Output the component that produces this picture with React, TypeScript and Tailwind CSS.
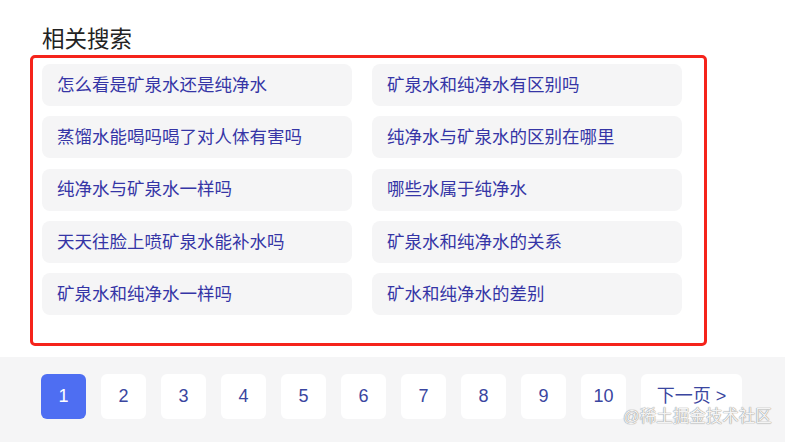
const related: string[] = [
  "怎么看是矿泉水还是纯净水",
  "矿泉水和纯净水有区别吗",
  "蒸馏水能喝吗喝了对人体有害吗",
  "纯净水与矿泉水的区别在哪里",
  "纯净水与矿泉水一样吗",
  "哪些水属于纯净水",
  "天天往脸上喷矿泉水能补水吗",
  "矿泉水和纯净水的关系",
  "矿泉水和纯净水一样吗",
  "矿水和纯净水的差别",
]

const pages = [1, 2, 3, 4, 5, 6, 7, 8, 9, 10]

export default function App() {
  return (
    <div
      className="relative w-[785px] h-[442px] bg-white overflow-hidden"
      style={{ fontFamily: '"Liberation Sans", "Noto Sans CJK SC", sans-serif' }}
    >
      <div className="pt-[25px] pl-[42px] text-[22.5px] leading-[30px] text-[#222222]">相关搜索</div>

      <div className="ml-[30px] w-[677px] h-[291px] border-[3px] border-[#f5231b] rounded-[5px] pt-[6px] pl-[9px]">
        <div className="grid grid-cols-[310px_310px] gap-x-[20px] gap-y-[10.25px]">
          {related.map((q) => (
            <div
              key={q}
              className="h-[42px] rounded-[8px] bg-[#f5f5f6] pl-[15px] flex items-center text-[17.5px] text-[#3535a6] whitespace-nowrap"
            >
              {q}
            </div>
          ))}
        </div>
      </div>

      <div className="mt-[11px] h-[85px] bg-[#f5f5f6] pt-[17px] pl-[41px] flex gap-[15px]">
        {pages.map((p) => (
          <div
            key={p}
            className={`w-[45px] h-[45px] rounded-[6px] flex items-center justify-center text-[18px] ${
              p === 1 ? "bg-[#4e6ef2] text-white" : "bg-white text-[#3a46a0]"
            }`}
          >
            {p}
          </div>
        ))}
        <div className="w-[101px] h-[45px] rounded-[6px] bg-white flex items-center justify-center text-[18px] text-[#3a46a0]">
          下一页 &gt;
        </div>
      </div>

      <div className="absolute left-[623px] top-[405px] text-[16.5px] leading-[22px] text-white/90 [text-shadow:0_0_1px_#8a8a8a,0_0_1px_#8a8a8a]">
        @稀土掘金技术社区
      </div>
    </div>
  )
}
